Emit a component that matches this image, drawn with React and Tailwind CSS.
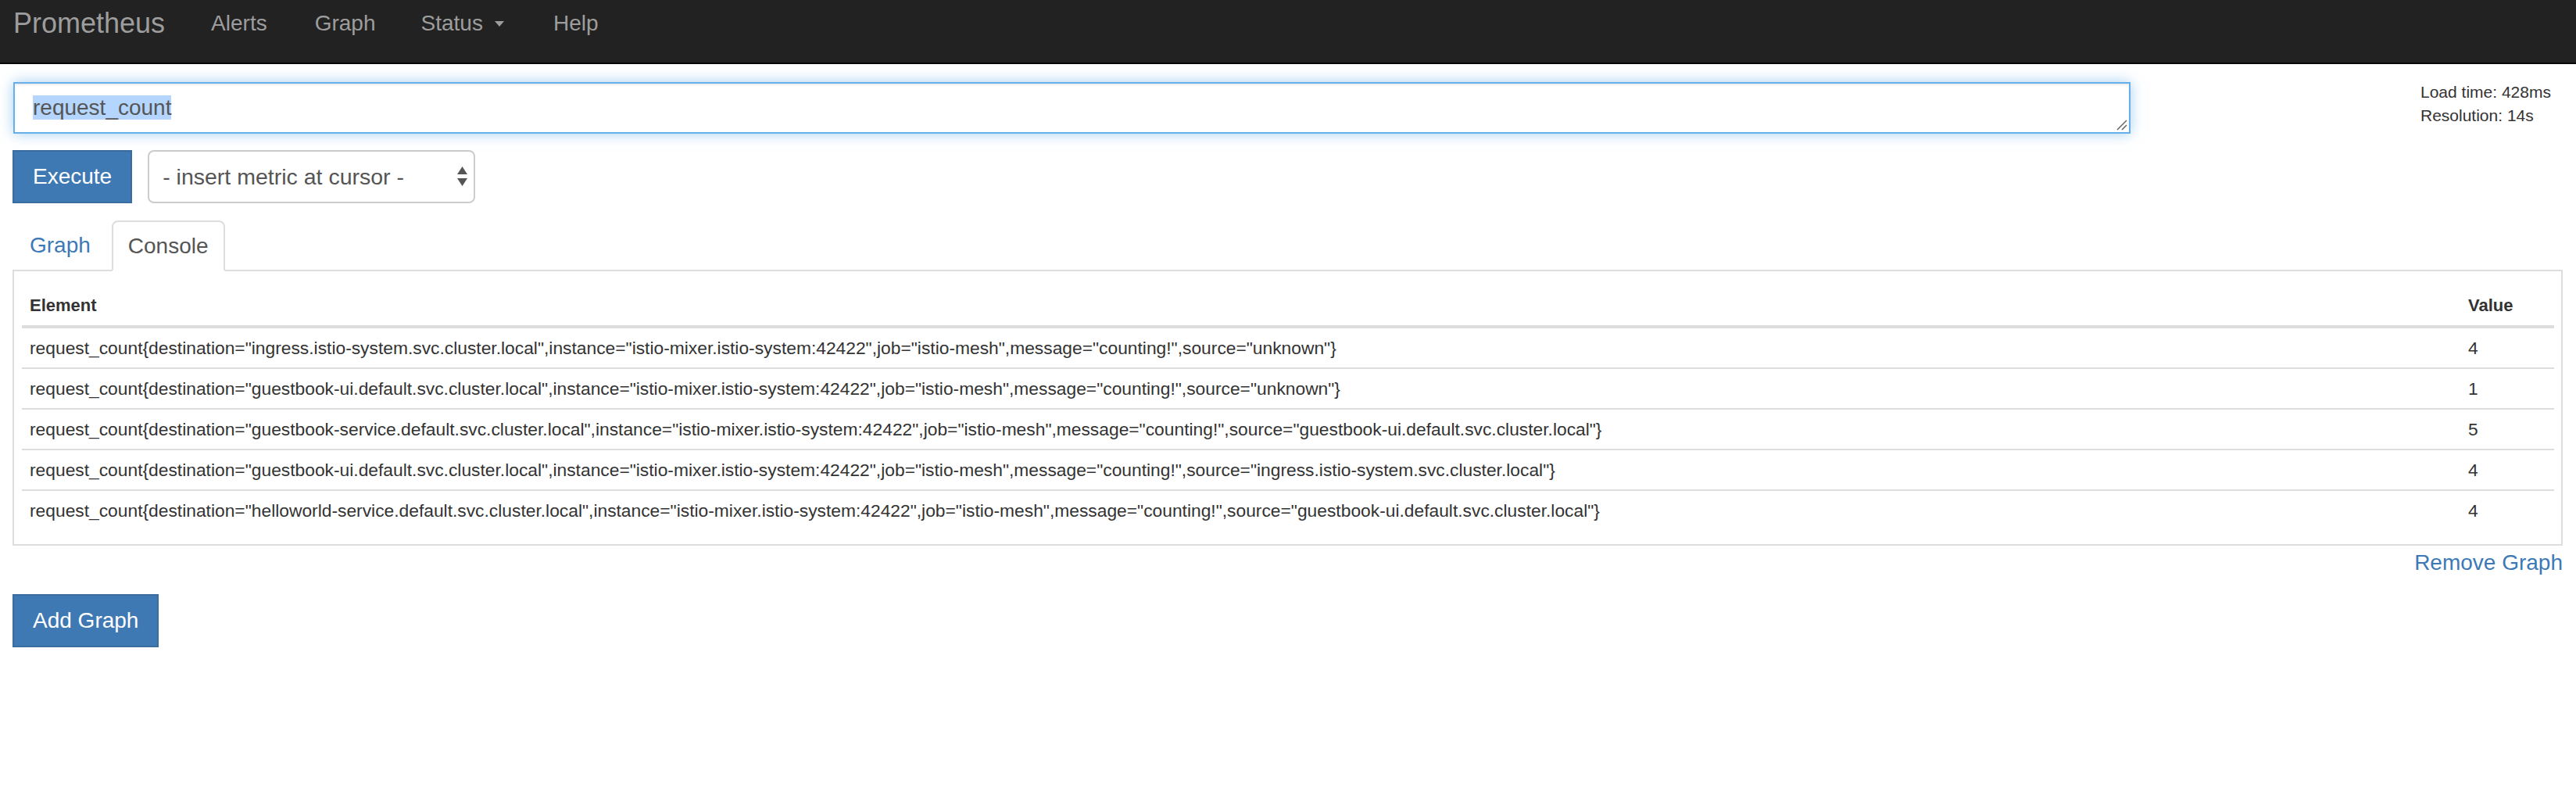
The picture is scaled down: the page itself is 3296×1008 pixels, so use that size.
import React from "react";

const rows = [
  {
    metric:
      'request_count{destination="ingress.istio-system.svc.cluster.local",instance="istio-mixer.istio-system:42422",job="istio-mesh",message="counting!",source="unknown"}',
    value: "4",
  },
  {
    metric:
      'request_count{destination="guestbook-ui.default.svc.cluster.local",instance="istio-mixer.istio-system:42422",job="istio-mesh",message="counting!",source="unknown"}',
    value: "1",
  },
  {
    metric:
      'request_count{destination="guestbook-service.default.svc.cluster.local",instance="istio-mixer.istio-system:42422",job="istio-mesh",message="counting!",source="guestbook-ui.default.svc.cluster.local"}',
    value: "5",
  },
  {
    metric:
      'request_count{destination="guestbook-ui.default.svc.cluster.local",instance="istio-mixer.istio-system:42422",job="istio-mesh",message="counting!",source="ingress.istio-system.svc.cluster.local"}',
    value: "4",
  },
  {
    metric:
      'request_count{destination="helloworld-service.default.svc.cluster.local",instance="istio-mixer.istio-system:42422",job="istio-mesh",message="counting!",source="guestbook-ui.default.svc.cluster.local"}',
    value: "4",
  },
];

const Navbar = () => (
  <nav className="h-[82px] bg-[#222] border-b-2 border-[#080808] flex items-start pl-[17px] text-[#9d9d9d]">
    <a className="mt-[12px] text-[36px] leading-none">Prometheus</a>
    <a className="mt-[16px] ml-[59px] text-[28px] leading-none">Alerts</a>
    <a className="mt-[16px] ml-[61px] text-[28px] leading-none">Graph</a>
    <a className="mt-[16px] ml-[58px] text-[28px] leading-none flex items-center gap-[15px]">
      Status
      <svg width="12" height="7" viewBox="0 0 12 7">
        <path d="M0 0 L12 0 L6 7 Z" fill="#9d9d9d" />
      </svg>
    </a>
    <a className="mt-[16px] ml-[63px] text-[28px] leading-none">Help</a>
  </nav>
);

const App = () => {
  return (
    <div className="min-h-[1008px] bg-white text-[#333] font-['Liberation_Sans',Arial,sans-serif]">
      <Navbar />

      <div className="pl-[16px] pr-[17px]">
        {/* Expression input + stats */}
        <div className="flex items-start pt-[23px]">
          <div className="ml-[1px] w-[2709px] h-[66px] border-2 border-[#66afe9] shadow-[inset_0_2px_2px_rgba(0,0,0,0.075),0_0_16px_rgba(102,175,233,0.6)] pl-[23px] pt-[15px] relative">
            <span className="bg-[#b4d5fe] text-[#555] text-[28px] leading-[31px] inline-block">request_count</span>
            <svg className="absolute right-[2px] bottom-[2px]" width="14" height="14" viewBox="0 0 14 14">
              <path d="M1 13 L13 1 M7 13 L13 7" stroke="#666" strokeWidth="1.5" />
            </svg>
          </div>
          <div className="ml-[371px] -mt-[2px] text-[21px] leading-[30px] text-[#333]">
            <div>Load time: 428ms</div>
            <div>Resolution: 14s</div>
          </div>
        </div>

        {/* Execute + metric select */}
        <div className="flex items-center gap-[20px] mt-[21px]">
          <button className="h-[68px] px-[24px] bg-[#3f79b3] border-2 border-[#3a6c9f] text-white text-[28px] leading-[40px]">
            Execute
          </button>
          <div className="w-[419px] h-[68px] border-2 border-[#ccc] rounded-[8px] flex items-center justify-between pl-[17px] pr-[8px] text-[#555] text-[28.5px]">
            <span>- insert metric at cursor -</span>
            <svg width="13" height="26" viewBox="0 0 13 26">
              <path d="M6.5 0 L13 10 L0 10 Z" fill="#555" />
              <path d="M0 15 L13 15 L6.5 25 Z" fill="#555" />
            </svg>
          </div>
        </div>

        {/* Tabs */}
        <div className="flex items-end gap-[6px] mt-[22px] border-b-2 border-[#ddd] pl-[1px]">
          <a className="h-[63px] flex items-center px-[19px] border-2 border-transparent text-[#3c79b6] text-[28px]">
            Graph
          </a>
          <a className="h-[65px] -mb-[2px] flex items-center px-[19px] border-2 border-[#ddd] border-b-white rounded-t-[8px] bg-white text-[#555] text-[28px]">
            Console
          </a>
        </div>

        {/* Console table */}
        <div className="border-2 border-t-0 border-[#ddd] pl-[10px] pr-[9px] pt-[19px] pb-[18px]">
          <table className="w-full border-collapse text-[22.8px] leading-[34px]">
            <thead>
              <tr className="border-b-4 border-[#ddd]">
                <th className="text-left font-bold text-[22px] py-[8px] px-[10px]">Element</th>
                <th className="text-left font-bold text-[22px] py-[8px] px-[10px] w-[120px]">Value</th>
              </tr>
            </thead>
            <tbody>
              {rows.map((r, i) => (
                <tr key={i} className={i > 0 ? "border-t-2 border-[#ddd]" : ""}>
                  <td className="py-[8px] px-[10px] whitespace-nowrap">{r.metric}</td>
                  <td className="py-[8px] px-[10px]">{r.value}</td>
                </tr>
              ))}
            </tbody>
          </table>
        </div>

        <div className="flex justify-end mt-[2px]">
          <a className="text-[#3c79b6] text-[28px] leading-[40px]">Remove Graph</a>
        </div>

        <button className="mt-[20px] h-[68px] px-[24px] bg-[#3f79b3] border-2 border-[#3a6c9f] text-white text-[28px] leading-[40px]">
          Add Graph
        </button>
      </div>
    </div>
  );
};

export default App;
